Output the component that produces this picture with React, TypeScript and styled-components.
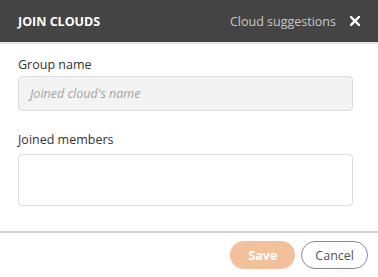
import React from 'react'
import styled, { createGlobalStyle } from 'styled-components'

const GlobalStyle = createGlobalStyle`
    html, body {
        margin: 0;
        padding: 0;
        background: #ffffff;
        font-family: "Open Sans", "Liberation Sans", sans-serif;
    }
`

const Dialog = styled.div`
    width: 378px;
    height: 277px;
    display: flex;
    flex-direction: column;
    background: #ffffff;
`

const Header = styled.div`
    height: 42px;
    background: #444444;
    border-bottom: 2px solid #e6e6e6;
    display: flex;
    align-items: center;
    padding: 0 18px;
`

const Title = styled.div`
    flex: 1;
    color: #ffffff;
    font-size: 12.5px;
    font-weight: 700;
`

const Suggestions = styled.div`
    color: #c8c8c8;
    font-size: 12.5px;
    margin-right: 14px;
`

const CloseButton = styled.div`
    width: 10px;
    height: 10px;
    display: flex;
`

const Body = styled.div`
    flex: 1;
    padding: 12px 25px 0 18px;
    display: flex;
    flex-direction: column;
`

const Label = styled.div`
    color: #333333;
    font-size: 12.5px;
    line-height: 17px;
    margin-bottom: 3px;
`

const TextInput = styled.div<{ $filled?: boolean; $tall?: boolean }>`
    height: ${p => (p.$tall ? '50px' : '33px')};
    border: 1px solid #dcdcdc;
    border-radius: 4px;
    background: ${p => (p.$filled ? '#f3f3f3' : '#ffffff')};
    display: flex;
    align-items: center;
    padding: 0 11px;
    margin-top: ${p => (p.$tall ? '3px' : '0')};
    margin-bottom: 20px;
`

const Placeholder = styled.span`
    color: #a4a4a4;
    font-style: italic;
    font-size: 12.5px;
`

const Divider = styled.div`
    height: 2px;
    background: #d0d0d0;
`

const Footer = styled.div`
    height: 44px;
    display: flex;
    align-items: center;
    justify-content: flex-end;
    gap: 6px;
    padding: 0 10px 0 0;
`

const Button = styled.div<{ $primary?: boolean }>`
    height: ${p => (p.$primary ? '28px' : '26px')};
    padding: 0 ${p => (p.$primary ? '18px' : '13px')};
    border-radius: 14px;
    display: flex;
    align-items: center;
    font-size: 12.5px;
    font-weight: ${p => (p.$primary ? 700 : 400)};
    color: ${p => (p.$primary ? '#ffffff' : '#555555')};
    background: ${p => (p.$primary ? '#f2c19c' : '#ffffff')};
    border: ${p => (p.$primary ? 'none' : '1px solid #8a8a8a')};
`

function App() {
    return (
        <>
            <GlobalStyle />
            <Dialog>
                <Header>
                    <Title>JOIN CLOUDS</Title>
                    <Suggestions>Cloud suggestions</Suggestions>
                    <CloseButton>
                        <svg width="10" height="10" viewBox="0 0 10 10">
                            <path d="M1 1 L9 9 M9 1 L1 9" stroke="#ffffff" strokeWidth="2.4" strokeLinecap="square" />
                        </svg>
                    </CloseButton>
                </Header>
                <Body>
                    <Label>Group name</Label>
                    <TextInput $filled>
                        <Placeholder>Joined cloud's name</Placeholder>
                    </TextInput>
                    <Label>Joined members</Label>
                    <TextInput $tall />
                </Body>
                <Divider />
                <Footer>
                    <Button $primary>Save</Button>
                    <Button>Cancel</Button>
                </Footer>
            </Dialog>
        </>
    )
}

export default App
